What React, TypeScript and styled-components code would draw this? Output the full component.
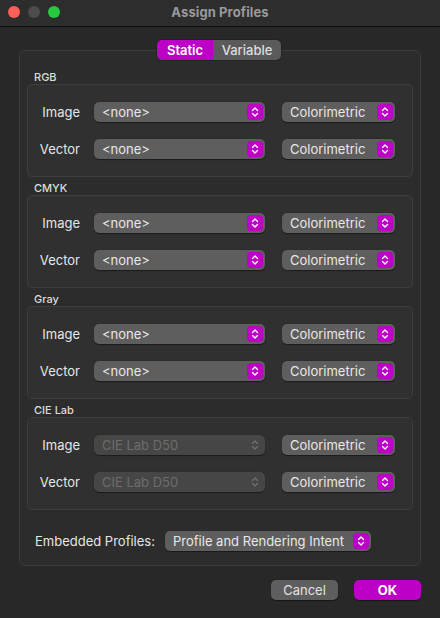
import React from "react";
import styled, { createGlobalStyle } from "styled-components";

const MAGENTA = "#bd00c6";

const Global = createGlobalStyle`
  html, body { margin: 0; padding: 0; background: #282828; }
  body { font-family: Inter, "Noto Sans", "Liberation Sans", sans-serif; -webkit-font-smoothing: antialiased; }
  * { box-sizing: border-box; }
`;

const Window = styled.div`
  width: 440px;
  height: 618px;
  background: #282828;
  display: flex;
  flex-direction: column;
  overflow: hidden;
`;

const TitleBar = styled.div`
  height: 27px;
  flex: none;
  background: #2d2d2d;
  border-bottom: 1px solid #0e0e0e;
  display: grid;
  grid-template-columns: 1fr auto 1fr;
  align-items: center;
  padding-bottom: 2px;
`;

const Lights = styled.div`
  display: flex;
  gap: 8px;
  padding-left: 8px;
`;

const Light = styled.span<{ $c: string }>`
  width: 12px;
  height: 12px;
  border-radius: 50%;
  background: ${(p) => p.$c};
`;

const Title = styled.div`
  font-size: 13px;
  font-weight: 700;
  color: #9a9a9a;
  letter-spacing: 0.1px;
`;

const Content = styled.div`
  display: flex;
  flex-direction: column;
  padding: 0 19px;
`;

const Segmented = styled.div`
  align-self: center;
  margin-top: 13px;
  margin-left: -2px;
  height: 20px;
  display: flex;
  border-radius: 5px;
  overflow: hidden;
  position: relative;
  z-index: 1;
  box-shadow: 0 0 0 0.5px rgba(0, 0, 0, 0.35);
`;

const Seg = styled.div<{ $active?: boolean; $w: number }>`
  width: ${(p) => p.$w}px;
  display: flex;
  align-items: center;
  justify-content: center;
  font-size: 13px;
  font-weight: ${(p) => (p.$active ? 600 : 500)};
  color: ${(p) => (p.$active ? "#ffffff" : "#dedede")};
  background: ${(p) => (p.$active ? MAGENTA : "#5a5a5a")};
`;

const Group = styled.div`
  margin-top: -10px;
  border: 1px solid #3b3b3b;
  border-radius: 6px;
  background: #2c2c2c;
  padding: 17px 7px 14px 7px;
  display: flex;
  flex-direction: column;
`;

const Sections = styled.div`
  display: flex;
  flex-direction: column;
  gap: 2px;
`;

const SectionLabel = styled.div`
  height: 16px;
  line-height: 18px;
  padding-left: 7px;
  font-size: 11px;
  font-weight: 500;
  color: #dcdcdc;
`;

const Box = styled.div`
  border: 1px solid #3e3e3e;
  border-radius: 5px;
  background: #303030;
  padding: 17px 0 17px 0;
  display: flex;
  flex-direction: column;
  gap: 17px;
`;

const Row = styled.div`
  display: flex;
  align-items: center;
`;

const RowLabel = styled.div`
  width: 52px;
  margin-right: 14px;
  text-align: right;
  font-size: 13px;
  color: #e6e6e6;
`;

const Popup = styled.div<{ $w: number; $disabled?: boolean; $ml?: number }>`
  width: ${(p) => p.$w}px;
  margin-left: ${(p) => p.$ml ?? 0}px;
  height: 20px;
  border-radius: 5px;
  background: ${(p) => (p.$disabled ? "#464646" : "#5e5e5e")};
  box-shadow: 0 0.5px 1px rgba(0, 0, 0, 0.45);
  display: flex;
  align-items: center;
  padding: 0 2px 0 8px;
  font-size: 13px;
  color: ${(p) => (p.$disabled ? "#6d6d6d" : "#e8e8e8")};
`;

const PopupText = styled.span`
  flex: 1;
  white-space: nowrap;
  overflow: hidden;
`;

const Arrow = styled.span<{ $plain?: boolean }>`
  width: 16px;
  height: 16px;
  border-radius: 4px;
  background: ${(p) => (p.$plain ? "transparent" : MAGENTA)};
  display: flex;
  align-items: center;
  justify-content: center;
  flex: none;
`;

const Embedded = styled.div`
  margin-top: 21px;
  display: flex;
  align-items: center;
  padding-left: 8px;
`;

const EmbeddedLabel = styled.div`
  width: 130px;
  font-size: 13px;
  color: #e6e6e6;
`;

const Buttons = styled.div`
  margin-top: 14px;
  display: flex;
  justify-content: flex-end;
  gap: 16px;
`;

const Button = styled.div<{ $primary?: boolean }>`
  width: 67px;
  height: 20px;
  border-radius: 5px;
  display: flex;
  align-items: center;
  justify-content: center;
  font-size: 13px;
  font-weight: ${(p) => (p.$primary ? 700 : 400)};
  color: ${(p) => (p.$primary ? "#ffffff" : "#e2e2e2")};
  background: ${(p) => (p.$primary ? MAGENTA : "#5e5e5e")};
  box-shadow: 0 0.5px 1px rgba(0, 0, 0, 0.45);
`;

const Chevrons = ({ color }: { color: string }) => (
  <svg width="8" height="12" viewBox="0 0 8 12" fill="none">
    <path d="M1.5 4.5 L4 2 L6.5 4.5" stroke={color} strokeWidth="1.4" strokeLinecap="round" strokeLinejoin="round" />
    <path d="M1.5 7.5 L4 10 L6.5 7.5" stroke={color} strokeWidth="1.4" strokeLinecap="round" strokeLinejoin="round" />
  </svg>
);

const Select = ({ text, w, ml, disabled }: { text: string; w: number; ml?: number; disabled?: boolean }) => (
  <Popup $w={w} $ml={ml} $disabled={disabled}>
    <PopupText>{text}</PopupText>
    <Arrow $plain={disabled}>
      <Chevrons color={disabled ? "#6f6f6f" : "#ffffff"} />
    </Arrow>
  </Popup>
);

const sections = [
  { name: "RGB", value: "<none>", disabled: false },
  { name: "CMYK", value: "<none>", disabled: false },
  { name: "Gray", value: "<none>", disabled: false },
  { name: "CIE Lab", value: "CIE Lab D50", disabled: true },
];

export default function App() {
  return (
    <>
      <Global />
      <Window>
        <TitleBar>
          <Lights>
            <Light $c="#fe5f57" />
            <Light $c="#4c4c4e" />
            <Light $c="#28c840" />
          </Lights>
          <Title>Assign Profiles</Title>
          <div />
        </TitleBar>
        <Content>
          <Segmented>
            <Seg $active $w={56}>Static</Seg>
            <Seg $w={68}>Variable</Seg>
          </Segmented>
          <Group>
            <Sections>
              {sections.map((s) => (
                <div key={s.name}>
                  <SectionLabel>{s.name}</SectionLabel>
                  <Box>
                    {["Image", "Vector"].map((r) => (
                      <Row key={r}>
                        <RowLabel>{r}</RowLabel>
                        <Select text={s.value} w={171} disabled={s.disabled} />
                        <Select text="Colorimetric" w={113} ml={17} />
                      </Row>
                    ))}
                  </Box>
                </div>
              ))}
            </Sections>
            <Embedded>
              <EmbeddedLabel>Embedded Profiles:</EmbeddedLabel>
              <Select text="Profile and Rendering Intent" w={206} />
            </Embedded>
          </Group>
          <Buttons>
            <Button>Cancel</Button>
            <Button $primary>OK</Button>
          </Buttons>
        </Content>
      </Window>
    </>
  );
}
